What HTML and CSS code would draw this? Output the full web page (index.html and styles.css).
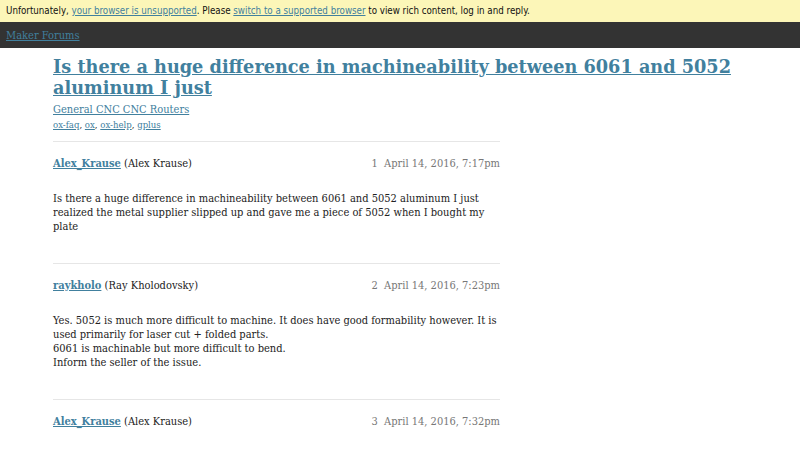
FILE: index.html
```html
<!DOCTYPE html>
<html>
<head>
<meta charset="utf-8">
<link rel="stylesheet" href="styles.css">
</head>
<body>
<div class="banner">Unfortunately, <a href="#">your browser is unsupported</a>. Please <a href="#">switch to a supported browser</a> to view rich content, log in and reply.</div>
<header class="site-header"><a href="#">Maker Forums</a></header>
<main class="wrap">
  <h1 class="title"><a href="#">Is there a huge difference in machineability between 6061 and 5052 aluminum I just</a></h1>
  <div class="category"><a href="#">General CNC CNC Routers</a></div>
  <div class="tags"><a href="#">ox-faq</a>, <a href="#">ox</a>, <a href="#">ox-help</a>, <a href="#">gplus</a></div>
  <div class="posts">
    <article class="post">
      <div class="meta">
        <span class="author"><a href="#">Alex_Krause</a> (Alex Krause)</span>
        <span class="date">1&nbsp; April 14, 2016, 7:17pm</span>
      </div>
      <div class="body">Is there a huge difference in machineability between 6061 and 5052 aluminum I just realized the metal supplier slipped up and gave me a piece of 5052 when I bought my plate</div>
    </article>
    <article class="post">
      <div class="meta">
        <span class="author"><a href="#">raykholo</a> (Ray Kholodovsky)</span>
        <span class="date">2&nbsp; April 14, 2016, 7:23pm</span>
      </div>
      <div class="body">Yes. 5052 is much more difficult to machine. It does have good formability however. It is used primarily for laser cut + folded parts.<br>6061 is machinable but more difficult to bend.<br>Inform the seller of the issue.</div>
    </article>
    <article class="post">
      <div class="meta">
        <span class="author"><a href="#">Alex_Krause</a> (Alex Krause)</span>
        <span class="date">3&nbsp; April 14, 2016, 7:32pm</span>
      </div>
    </article>
  </div>
</main>
</body>
</html>
```
FILE: styles.css
```css
html, body {
  margin: 0;
  padding: 0;
  background: #fff;
  font-family: "DejaVu Serif Condensed", "DejaVu Serif", serif;
  color: #222;
}
a { color: #41809e; }
.banner {
  background: #fcf6b8;
  height: 22px;
  line-height: 22px;
  padding: 0 6px;
  font-family: "DejaVu Sans Condensed", "DejaVu Sans", sans-serif;
  font-size: 9.7px;
  color: #111;
}
.site-header {
  background: #333;
  height: 26px;
  box-sizing: border-box;
  padding: 2px 6px 0;
  line-height: 24px;
  font-size: 11px;
}
.wrap {
  width: 694px;
  margin: 0 auto;
}
.title {
  margin: 8px 0 0;
  font-family: "DejaVu Serif", serif;
  font-size: 17.7px;
  line-height: 21px;
  font-weight: bold;
}
.category {
  margin-top: 4px;
  font-size: 11px;
  line-height: 16px;
}
.tags {
  font-size: 9.5px;
  line-height: 14px;
  margin-bottom: 9px;
}
.posts { width: 447px; }
.post {
  border-top: 1px solid #e6e6e6;
  padding-top: 14px;
  padding-bottom: 29px;
}
.meta {
  display: flex;
  justify-content: space-between;
  font-size: 11px;
  line-height: 16px;
}
.author a { font-weight: bold; }
.date { color: #777; }
.body {
  margin-top: 20px;
  font-size: 11px;
  line-height: 14px;
}
```
